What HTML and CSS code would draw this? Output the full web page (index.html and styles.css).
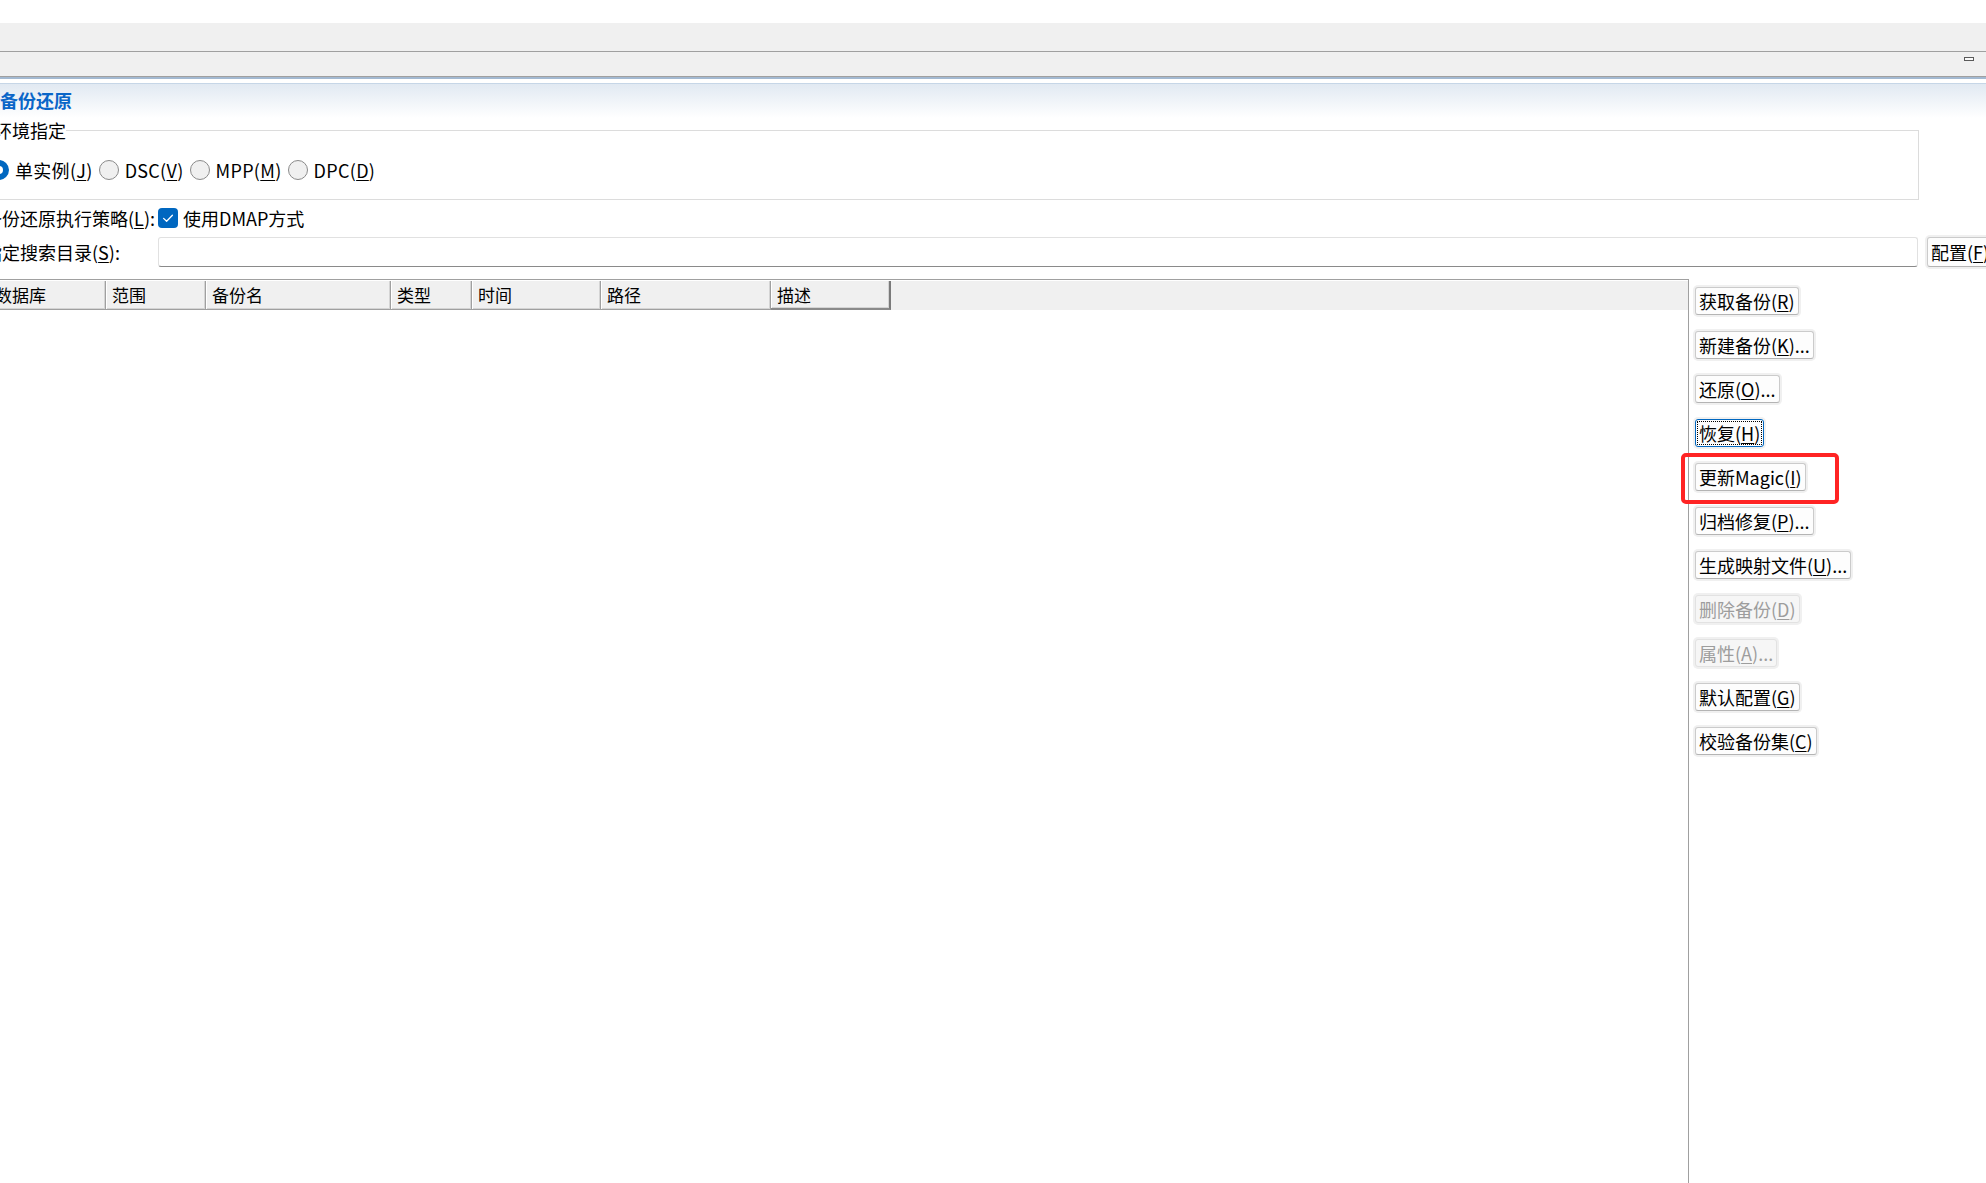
FILE: index.html
```html
<!DOCTYPE html>
<html lang="zh-CN">

<head>
    <meta charset="UTF-8">
    <title>备份还原</title>
    <link rel="stylesheet" href="styles.css">
</head>

<body>
    <div class="window">
        <div class="top-strip"></div>
        <div class="menubar"></div>
        <div class="tabbar"><span class="min-btn"></span></div>

        <div class="title-area">
            <div class="title">备份还原</div>
        </div>

        <div class="form">
            <fieldset class="env">
                <legend>环境指定</legend>
                <div class="radio-row">
                    <label class="radio"><input type="radio" name="env" checked><span>单实例(<u>J</u>)</span></label>
                    <label class="radio"><input type="radio" name="env"><span>DSC(<u>V</u>)</span></label>
                    <label class="radio"><input type="radio" name="env"><span>MPP(<u>M</u>)</span></label>
                    <label class="radio"><input type="radio" name="env"><span>DPC(<u>D</u>)</span></label>
                </div>
            </fieldset>

            <div class="field-row">
                <span class="field-label">备份还原执行策略(<u>L</u>):</span>
                <label class="check">
                    <svg class="check-box" width="20" height="20" viewBox="0 0 20 20">
                        <rect x="0" y="0" width="20" height="20" rx="4" fill="#0067c0"/>
                        <path d="M5.6 10.4 L8.6 13.3 L14.4 7.2" fill="none" stroke="#fff" stroke-width="1.3" stroke-linecap="round" stroke-linejoin="round"/>
                    </svg>
                    <span>使用DMAP方式</span>
                </label>
            </div>

            <div class="field-row search-row">
                <span class="field-label">指定搜索目录(<u>S</u>):</span>
                <input class="text-input" type="text">
                <button class="btn btn-config">配置(<u>F</u>)</button>
            </div>

            <div class="browser">
                <div class="list">
                    <div class="list-head">
                        <div class="col col-db">数据库</div>
                        <div class="col col-scope">范围</div>
                        <div class="col col-name">备份名</div>
                        <div class="col col-type">类型</div>
                        <div class="col col-time">时间</div>
                        <div class="col col-path">路径</div>
                        <div class="col col-desc">描述</div>
                        <div class="col-fill"></div>
                    </div>
                </div>

                <div class="actions">
                    <button class="btn">获取备份(<u>R</u>)</button>
                    <button class="btn">新建备份(<u>K</u>)...</button>
                    <button class="btn">还原(<u>O</u>)...</button>
                    <button class="btn focused">恢复(<u>H</u>)</button>
                    <button class="btn marked">更新Magic(<u>I</u>)</button>
                    <button class="btn">归档修复(<u>P</u>)...</button>
                    <button class="btn">生成映射文件(<u>U</u>)...</button>
                    <button class="btn" disabled>删除备份(<u>D</u>)</button>
                    <button class="btn" disabled>属性(<u>A</u>)...</button>
                    <button class="btn">默认配置(<u>G</u>)</button>
                    <button class="btn">校验备份集(<u>C</u>)</button>
                </div>
            </div>
        </div>
    </div>
</body>

</html>
```

FILE: styles.css
```css
*,
*::before,
*::after {
    box-sizing: border-box;
}

body {
    margin: 0;
    font-family: "Noto Sans CJK SC", "Noto Sans", sans-serif;
    font-size: 18px;
    line-height: 24px;
    color: #000;
    background-color: #fff;
}

u {
    text-underline-offset: 2px;
}

.window {
    width: 1986px;
    height: 1183px;
    overflow: hidden;
    background-color: #fff;
}

.top-strip {
    height: 23px;
    background-color: #fff;
}

.menubar {
    height: 29px;
    background-color: #f0f0f0;
    border-bottom: 1px solid #a0a0a0;
}

.tabbar {
    height: 25px;
    display: flex;
    justify-content: flex-end;
    align-items: flex-start;
    padding: 5px 12px 0 0;
    background-color: #f0f0f0;
    border-bottom: 1px solid #a0a0a0;
}

.min-btn {
    width: 10px;
    height: 4px;
    border: 1px solid #5a5a5a;
    background-color: #fafafa;
}

.title-area {
    border-top: 2px solid #a3b9d1;
    padding-top: 4px;
}

.title {
    height: 35px;
    padding-top: 4px;
    border-top: 1px solid #c6d6e7;
    background: linear-gradient(#e1e9f2, #ffffff);
    color: #0a66c8;
    font-weight: bold;
}

.form {
    margin-left: -16px;
}

/* 环境指定 */

.env {
    width: 1935px;
    margin: 0;
    padding: 0 0 17px 0;
    border: 1px solid #dcdcdc;
}

.env legend {
    margin-left: 9px;
    padding: 0;
    line-height: 24px;
}

.radio-row {
    display: flex;
    gap: 6px;
    margin-top: 16px;
    padding-left: 4px;
}

.radio {
    display: flex;
    align-items: center;
    gap: 6px;
    letter-spacing: 0.3px;
}

.radio input {
    appearance: none;
    width: 20px;
    height: 20px;
    margin: 0;
    border: 1px solid #8a8a8a;
    border-radius: 50%;
    background-color: #f0f0f0;
}

.radio input:checked {
    border: 6px solid #0067c0;
    background-color: #fff;
}

/* label + field rows */

.field-row {
    display: flex;
    align-items: center;
    margin-top: 6px;
    height: 24px;
}

.field-label {
    flex: none;
    width: 174px;
    white-space: nowrap;
}

.check {
    display: flex;
    align-items: center;
    gap: 5px;
}

.check-box {
    display: block;
}

.search-row {
    margin-top: 7px;
    height: 30px;
}

.text-input {
    flex: none;
    width: 1760px;
    height: 30px;
    margin: 0;
    border: 1px solid #e1e1e1;
    border-bottom-color: #8a8a8a;
    border-radius: 3px;
    background-color: #fff;
}

/* list + buttons */

.browser {
    display: flex;
    margin-top: 12px;
    margin-left: 5px;
}

.list {
    flex: none;
    width: 1700px;
    height: 1000px;
    padding-top: 1px;
    border-top: 1px solid #a0a0a0;
    border-right: 1px solid #a0a0a0;
    background-color: #fff;
}

.list-head {
    display: flex;
    height: 29px;
    background-color: #f0f0f0;
    font-size: 17px;
}

.col {
    flex: none;
    height: 29px;
    line-height: 28px;
    padding-left: 6px;
    border-right: 1px solid #a0a0a0;
    border-bottom: 1px solid #a0a0a0;
    box-shadow: inset 1px 0 0 #fff, inset -1px -1px 0 #d4d4d4;
    white-space: nowrap;
}

.col-db {
    width: 117px;
}

.col-scope {
    width: 100px;
}

.col-name {
    width: 185px;
}

.col-type {
    width: 81px;
}

.col-time {
    width: 129px;
}

.col-path {
    width: 170px;
}

.col-desc {
    width: 120px;
    border-right: 2px solid #7a7a7a;
    border-bottom: 2px solid #8a8a8a;
}

.col-fill {
    flex: 1;
}

.actions {
    display: flex;
    flex-direction: column;
    align-items: flex-start;
    gap: 16px;
    padding-top: 8px;
    margin-left: 6px;
}

.btn {
    font: inherit;
    height: 28px;
    line-height: 26px;
    margin: 0;
    padding: 0 3px;
    color: #000;
    background-color: #fdfdfd;
    border: 1px solid #cbcbcb;
    border-bottom-color: #b4b4b4;
    border-radius: 3px;
    box-shadow: 0 0 0 2px #f0f0f0;
    white-space: nowrap;
}

.btn.btn-config {
    flex: none;
    margin-left: 9px;
    height: 30px;
    line-height: 28px;
}

.btn:disabled {
    color: #9d9d9d;
    background-color: #f6f6f6;
    border-color: #e2e2e2;
}

.btn.focused {
    border-color: #0067c0;
    outline: 1px dotted #000;
    outline-offset: -3px;
}

.btn.marked {
    position: relative;
}

.btn.marked::after {
    content: "";
    position: absolute;
    left: -15px;
    top: -11px;
    width: 158px;
    height: 51px;
    border: 4px solid #ff2424;
    border-radius: 5px;
}
```
